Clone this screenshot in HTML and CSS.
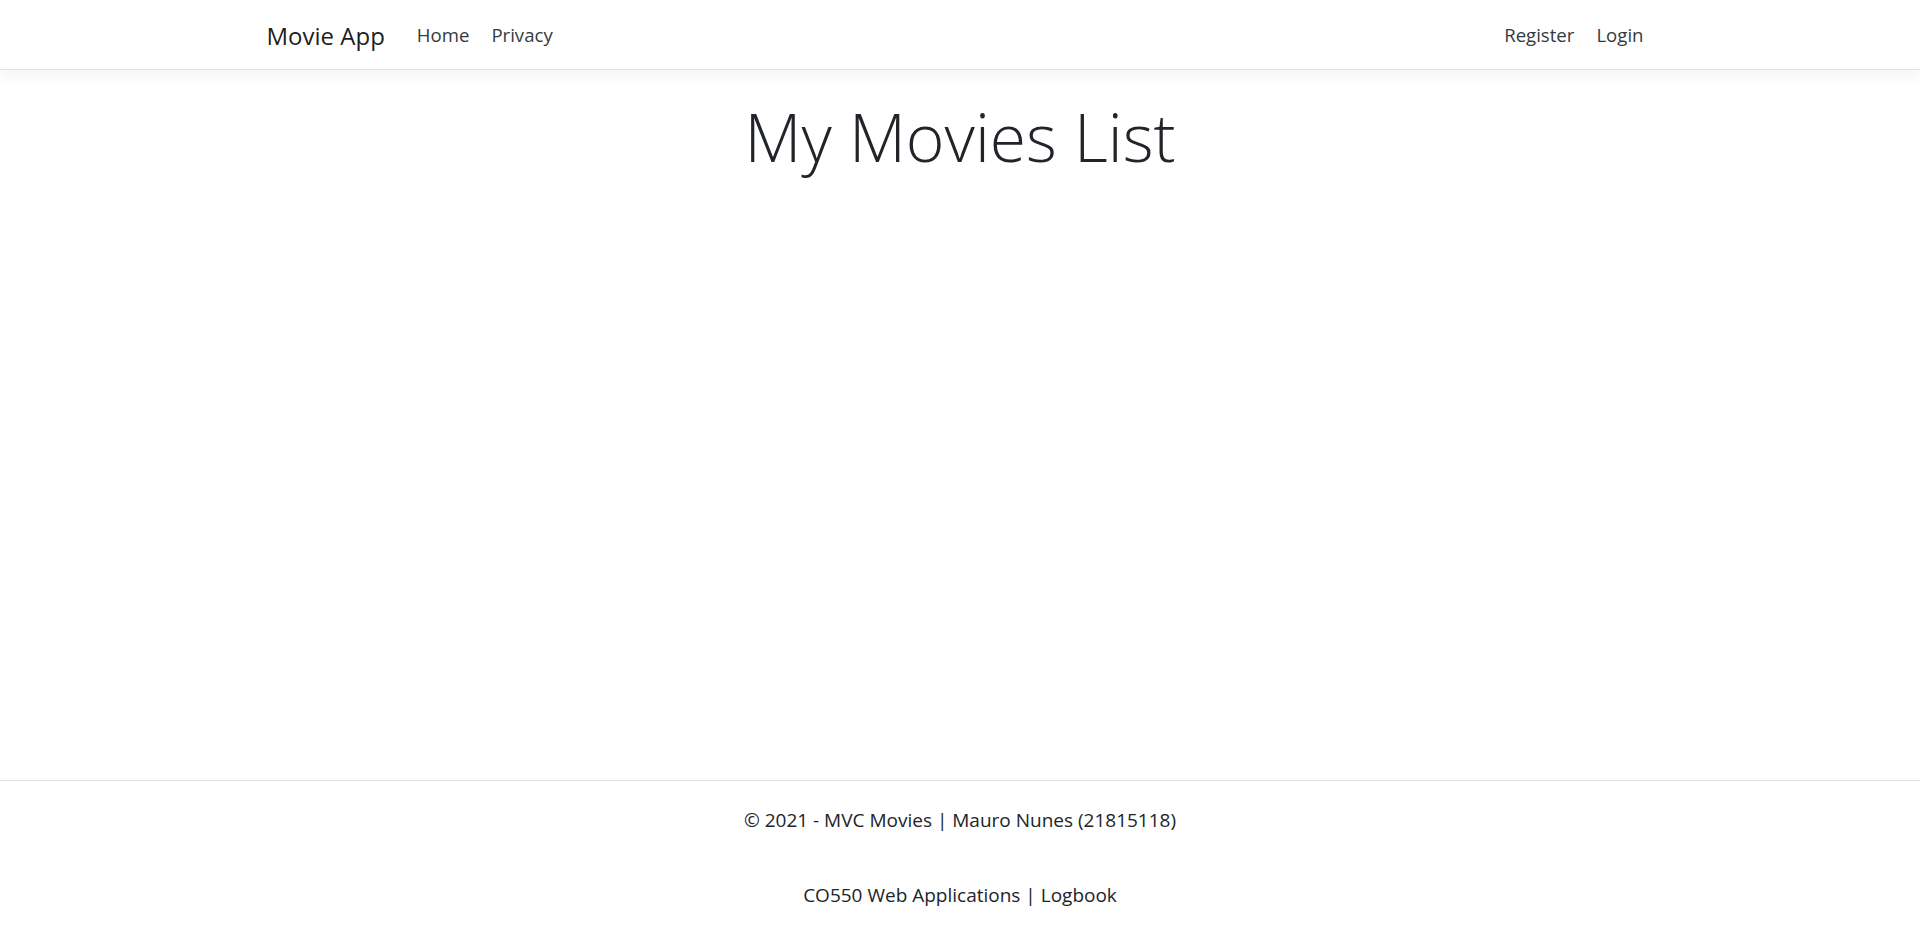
FILE: index.html
```html
<!DOCTYPE html>
<html lang="en">
<head>
<meta charset="utf-8">
<title>My Movies List - Movie App</title>
<link rel="stylesheet" href="styles.css">
</head>
<body>
<header class="navbar">
  <div class="container nav-inner">
    <a class="brand" href="#">Movie App</a>
    <nav class="nav-left">
      <a class="nav-link" href="#">Home</a>
      <a class="nav-link" href="#">Privacy</a>
    </nav>
    <nav class="nav-right">
      <a class="nav-link" href="#">Register</a>
      <a class="nav-link" href="#">Login</a>
    </nav>
  </div>
</header>
<main class="main">
  <h1 class="display">My Movies List</h1>
</main>
<footer class="footer">
  <div class="footer-line">© 2021 - MVC Movies | Mauro Nunes (21815118)</div>
  <div class="footer-line">CO550 Web Applications | Logbook</div>
</footer>
</body>
</html>
```
FILE: styles.css
```css
* { box-sizing: border-box; }
html, body { margin: 0; padding: 0; }
body {
  font-family: "Open Sans", "Noto Sans", "Liberation Sans", sans-serif;
  color: #212529;
  background: #fff;
  height: 928px;
  display: flex;
  flex-direction: column;
  overflow: hidden;
}
a { text-decoration: none; }
.navbar {
  height: 70px;
  border-bottom: 1px solid #dee2e6;
  box-shadow: 0 5px 15px rgba(0,0,0,0.05);
  background: #fff;
  display: flex;
  align-items: center;
  flex-shrink: 0;
  padding-top: 2px;
}
.container {
  width: 1425px;
  margin: 0 auto;
  padding: 0 18px 0 19px;
}
.nav-inner {
  display: flex;
  align-items: center;
}
.brand {
  font-size: 24px;
  color: rgba(0,0,0,0.9);
  margin-right: 21px;
  line-height: 1;
}
.nav-left, .nav-right { display: flex; }
.nav-right { margin-left: auto; }
.nav-link {
  font-size: 18.6px;
  color: #343a40;
  padding: 0 11px;
  line-height: 1;
}
.main {
  flex: 1;
  padding-top: 27px;
}
.display {
  font-size: 66px;
  font-weight: 300;
  line-height: 1.2;
  text-align: center;
  margin: 0;
}
.footer {
  flex-shrink: 0;
  height: 148px;
  border-top: 1px solid #dee2e6;
  text-align: center;
  font-size: 19px;
  padding-top: 2px;
}
.footer-line {
  line-height: 75px;
  color: #212529;
}
```
